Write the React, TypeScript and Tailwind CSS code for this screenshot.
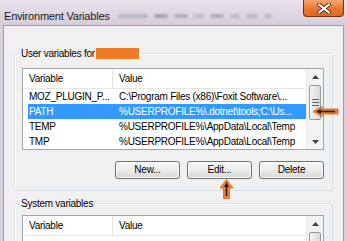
import React from "react";

const UpGlyph = () => (
  <svg width="7" height="4" viewBox="0 0 7 4"><path d="M0 4 L3.5 0 L7 4 Z" fill="#404040" /></svg>
);
const DownGlyph = () => (
  <svg width="7" height="4" viewBox="0 0 7 4"><path d="M0 0 L3.5 4 L7 0 Z" fill="#404040" /></svg>
);

const Thumb = ({ h }: { h: string }) => (
  <div className={`mx-[2px] ${h} rounded-[2px] border border-[#9a9a9a] bg-gradient-to-r from-[#f4f4f4] to-[#dadada] flex flex-col items-center justify-center gap-[2px]`}>
    <div className="w-[7px] h-px bg-[#666]" />
    <div className="w-[7px] h-px bg-[#666]" />
    <div className="w-[7px] h-px bg-[#666]" />
  </div>
);

const rows = [
  { n: "MOZ_PLUGIN_P...", v: "C:\\Program Files (x86)\\Foxit Software\\...", sel: false },
  { n: "PATH", v: "%USERPROFILE%\\.dotnet\\tools;C:\\Us...", sel: true },
  { n: "TEMP", v: "%USERPROFILE%\\AppData\\Local\\Temp", sel: false },
  { n: "TMP", v: "%USERPROFILE%\\AppData\\Local\\Temp", sel: false },
];

const Header = () => (
  <div className="h-[20px] flex items-center bg-white border-b border-[#e6e6e6] mr-[1px]">
    <div className="w-[90px] h-full border-r border-[#e3e3e3] pl-[6px] flex items-center">Variable</div>
    <div className="pl-[6px]">Value</div>
  </div>
);

const Btn = ({ label, children }: { label: string; children?: React.ReactNode }) => (
  <div className="relative w-[65px] h-[18px] rounded-[3px] border border-[#707070] bg-gradient-to-b from-[#f7f7f7] via-[#ececec] to-[#d6d6d6] flex items-center justify-center shadow-[inset_0_0_0_1px_#fcfcfc]">
    {label}
    {children}
  </div>
);

export default function App() {
  return (
    <div className="w-[347px] h-[241px] overflow-hidden bg-[#d8d0dc] flex flex-col font-['Liberation_Sans',Arial,sans-serif] text-[10px] tracking-[-0.25px] text-black">
      {/* title bar */}
      <div className="h-[27px] flex items-start bg-gradient-to-b from-[#e9e3ec] to-[#d6cdda]">
        <span className="ml-[4px] mt-[8px] text-[11px] tracking-[-0.2px] text-[#1a1a1a]">Environment Variables</span>
        <div className="ml-[8px] mt-[14px] flex gap-[6px] opacity-60 blur-[1px]">
          <div className="w-[30px] h-[4px] bg-[#9aa0b2] rounded" />
          <div className="w-[14px] h-[4px] bg-[#7e8496] rounded" />
          <div className="w-[14px] h-[4px] bg-[#8e93a5] rounded" />
          <div className="w-[10px] h-[4px] bg-[#a3a8b8] rounded" />
          <div className="w-[14px] h-[4px] bg-[#8e93a5] rounded" />
          <div className="w-[10px] h-[4px] bg-[#a3a8b8] rounded" />
          <div className="w-[12px] h-[4px] bg-[#9aa0b2] rounded" />
          <div className="w-[8px] h-[4px] bg-[#a3a8b8] rounded" />
        </div>
        <div className="ml-auto mr-[3px] w-[41px] h-[17px] rounded-b-[4px] border border-t-0 border-[#6b3416] bg-gradient-to-b from-[#f6a672] via-[#ec7a32] to-[#e2661c] flex items-center justify-center">
          <svg width="14" height="11" viewBox="0 0 14 11">
            <path d="M2 1.5 L12 9.5 M12 1.5 L2 9.5" stroke="#5a3020" strokeWidth="4" strokeLinecap="round" />
            <path d="M2 1.5 L12 9.5 M12 1.5 L2 9.5" stroke="#ffffff" strokeWidth="2.2" strokeLinecap="round" />
          </svg>
        </div>
      </div>

      {/* body */}
      <div className="flex-1 mx-[3px] bg-[#f0f0f0] border border-[#a29aa8] border-b-0 px-[10px] pt-[21px] flex flex-col">
        <fieldset className="border border-[#d5dfe5] rounded-[3px] pl-[7px] pr-[8px] pt-[8px] pb-[11px] shadow-[inset_1px_1px_0_#fff]">
          <legend className="ml-[-2px] px-[1px] leading-[13px] flex items-center">
            User variables for <span className="inline-block ml-[1px] w-[43px] h-[11px] bg-[#ef7a27]" />
          </legend>
          <div className="relative h-[82px] border border-[#a0a4ac] bg-white flex">
            <div className="flex-1 flex flex-col">
              <Header />
              {rows.map((r) => (
                <div key={r.n} className={`h-[15px] ml-[5px] flex items-center ${r.sel ? "bg-[#3399ff] text-white" : ""}`}>
                  <div className="w-[85px] pl-[1px] whitespace-nowrap">{r.n}</div>
                  <div className="pl-[6px] whitespace-nowrap">{r.v}</div>
                </div>
              ))}
            </div>
            <div className="w-[17px] bg-[#f3f3f3] border-l border-[#e8e8e8] flex flex-col">
              <div className="h-[16px] flex items-center justify-center"><UpGlyph /></div>
              <Thumb h="h-[35px]" />
              <div className="flex-1" />
              <div className="h-[14px] flex items-center justify-center"><DownGlyph /></div>
            </div>
            <svg className="absolute left-[289px] top-[37px]" width="27" height="11" viewBox="0 0 27 11">
              <path d="M1 5.5 L10 0.5 L10 3 L26 3 L26 8 L10 8 L10 10.5 Z" fill="#f27f2b" stroke="#d0641a" strokeWidth="0.8" />
              <path d="M4 5.5 L9 3 L9 8 Z" fill="#2e2018" />
              <path d="M8 5.5 L23 5.5" stroke="#2e2018" strokeWidth="1.6" />
            </svg>
          </div>
          <div className="mt-[11px] flex justify-end gap-[7px]">
            <Btn label="New..." />
            <Btn label="Edit...">
              <svg className="absolute left-[31px] top-[17px]" width="15" height="20" viewBox="0 0 15 20">
                <path d="M7.5 0.5 L14 9 L10.5 9 L10.5 19.5 L4.5 19.5 L4.5 9 L1 9 Z" fill="#f27f2b" stroke="#d0641a" strokeWidth="0.8" />
                <path d="M7.5 3 L10 8 L5 8 Z" fill="#2e2018" />
                <path d="M7.5 7 L7.5 17" stroke="#2e2018" strokeWidth="1.6" />
              </svg>
            </Btn>
            <Btn label="Delete" />
          </div>
        </fieldset>

        <fieldset className="mt-[6px] border border-[#d5dfe5] rounded-[3px] pl-[7px] pr-[8px] pt-[5px] pb-[11px] shadow-[inset_1px_1px_0_#fff]">
          <legend className="ml-[-2px] px-[1px] leading-[13px]">System variables</legend>
          <div className="h-[82px] border border-[#a0a4ac] bg-white flex">
            <div className="flex-1 flex flex-col">
              <Header />
            </div>
            <div className="w-[17px] bg-[#f3f3f3] border-l border-[#e8e8e8] flex flex-col">
              <div className="h-[16px] flex items-center justify-center"><UpGlyph /></div>
              <Thumb h="h-[35px]" />
            </div>
          </div>
        </fieldset>
      </div>
    </div>
  );
}
